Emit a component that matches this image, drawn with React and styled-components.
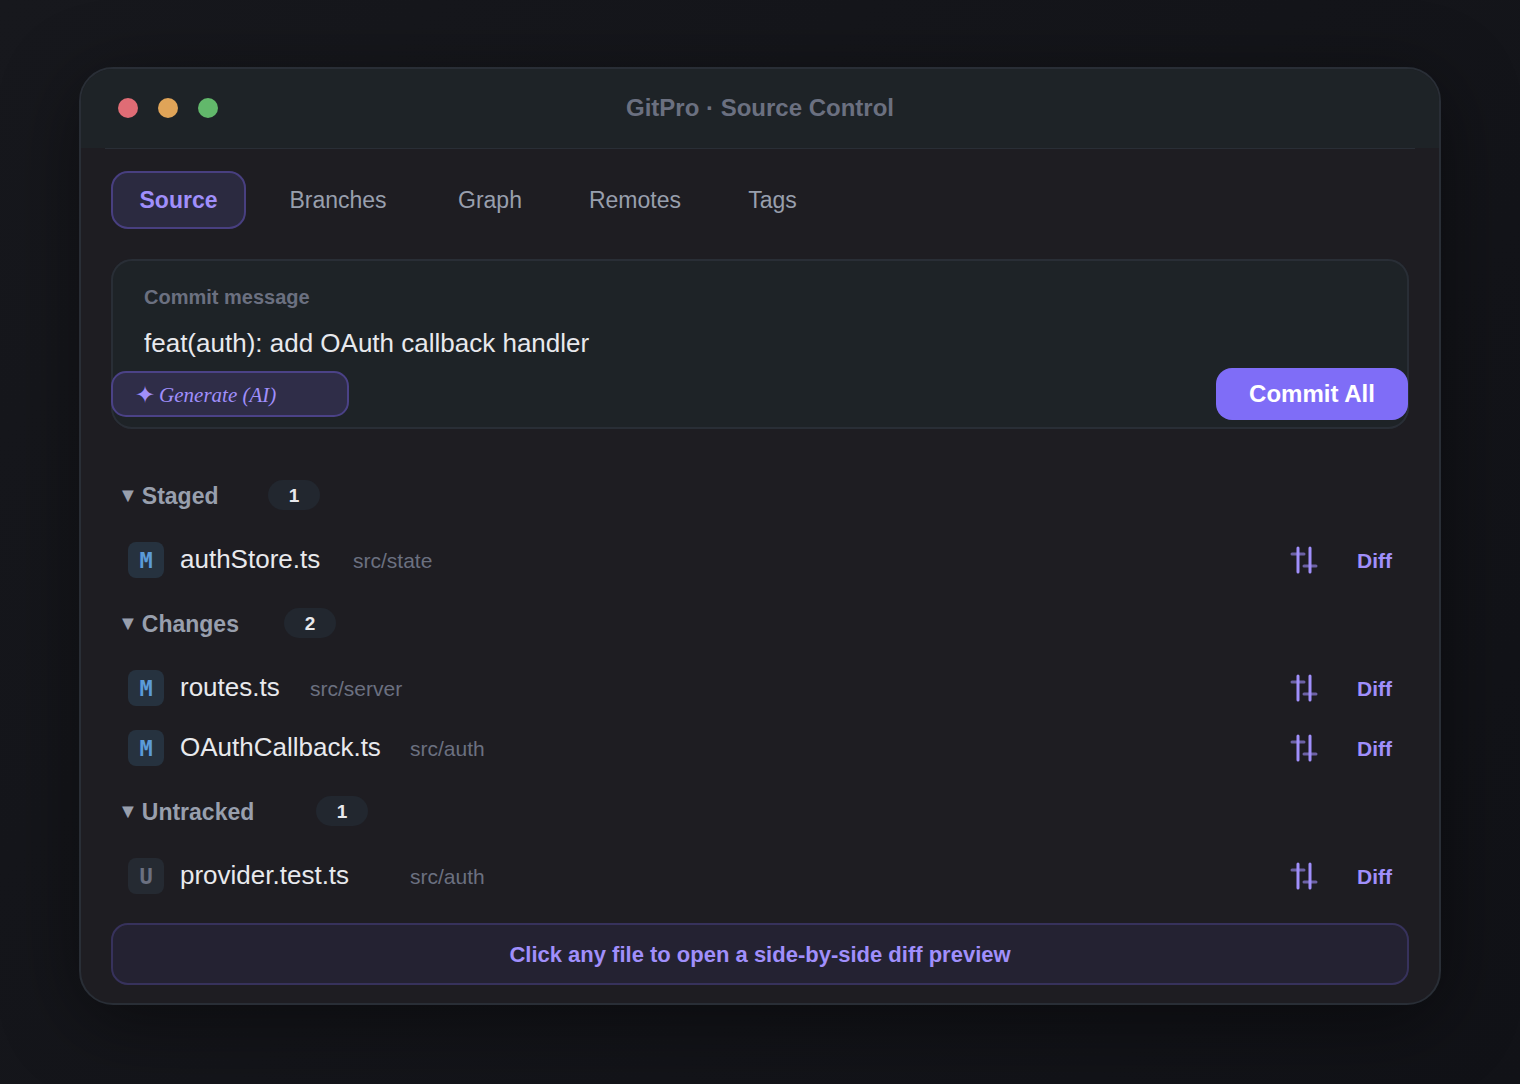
// src/App.jsx
import React, { useState } from "react";
import styled, { createGlobalStyle } from "styled-components";

// -------- Data --------

const tabs = [
  { name: "Source", width: 135 },
  { name: "Branches", width: 152 },
  { name: "Graph", width: 120 },
  { name: "Remotes", width: 138 },
  { name: "Tags", width: 105 },
];

const sections = [
  {
    title: "Staged",
    width: 150,
    files: [{ status: "M", name: "authStore.ts", path: "src/state", width: 173 }],
  },
  {
    title: "Changes",
    width: 166,
    files: [
      { status: "M", name: "routes.ts", path: "src/server", width: 130 },
      { status: "M", name: "OAuthCallback.ts", path: "src/auth", width: 230 },
    ],
  },
  {
    title: "Untracked",
    width: 198,
    files: [{ status: "U", name: "provider.test.ts", path: "src/auth", width: 230 }],
  },
];

// -------- Styled Components --------

const GlobalStyle = createGlobalStyle`
  * {
    box-sizing: border-box;
  }

  body {
    margin: 0;
    background: #121317;
    font-family: "Liberation Sans", Arial, sans-serif;
  }

  button,
  input {
    margin: 0;
    padding: 0;
    border: none;
    background: none;
    font-family: inherit;
  }

  button {
    cursor: pointer;
  }
`;

const Page = styled.div`
  min-height: 100vh;
  padding: 67px 79px 79px;
  background: linear-gradient(135deg, #17181d 0%, #111217 100%);
`;

const Window = styled.main`
  border: 2px solid #292e36;
  border-radius: 34px;
  background: #1e1d22;
  box-shadow: 0 16px 80px rgba(0, 0, 0, 0.45);
`;

const TitleBar = styled.header`
  display: grid;
  grid-template-columns: 1fr auto 1fr;
  align-items: center;
  height: 79px;
  padding: 0 37px 2px;
  border-radius: 32px 32px 0 0;
  background: #1e2327;
`;

const Lights = styled.div`
  display: flex;
  gap: 20px;
`;

const Light = styled.span`
  width: 20px;
  height: 20px;
  border-radius: 50%;
  background: ${({ $color }) => $color};
`;

const Title = styled.h1`
  margin: 0;
  color: #6b7080;
  font-size: 24px;
  line-height: 28px;
`;

const Divider = styled.hr`
  height: 1px;
  margin: 0 24px;
  border: none;
  background: #292e36;
`;

const Content = styled.div`
  padding: 22px 30px 18px;
`;

const TabList = styled.nav`
  display: flex;
  gap: 16px;
`;

const Tab = styled.button`
  width: ${({ $width }) => $width}px;
  height: 58px;
  border: 2px solid ${({ $active }) => ($active ? "#483f80" : "transparent")};
  border-radius: 17px;
  background: ${({ $active }) => ($active ? "#2b2a40" : "transparent")};
  color: ${({ $active }) => ($active ? "#a08ffb" : "#989fad")};
  font-size: 23px;
  font-weight: ${({ $active }) => ($active ? 700 : 400)};
`;

const CommitBox = styled.form`
  display: flex;
  flex-direction: column;
  margin-top: 30px;
  padding: 26px 0 9px;
  border-radius: 21px;
  background: #1e2327;
  box-shadow: inset 0 0 0 2px #292e36;
`;

const CommitLabel = styled.label`
  padding: 0 33px;
  color: #6b7080;
  font-size: 20px;
  font-weight: 700;
  line-height: 24px;
`;

const CommitInput = styled.input`
  height: 34px;
  margin: 17px 33px 8px;
  outline: none;
  color: #e8e9ed;
  font-size: 26px;
`;

const CommitActions = styled.div`
  display: flex;
  align-items: center;
  justify-content: space-between;
  padding-right: 1px;
`;

const GenerateButton = styled.button`
  display: flex;
  align-items: center;
  gap: 4px;
  width: 238px;
  height: 46px;
  padding: 2px 0 0 22px;
  border: 2px solid #4b4287;
  border-radius: 15px;
  background: #2f2d48;
  color: #a08ffb;
  font-family: "Liberation Serif", "Times New Roman", serif;
  font-size: 21px;
  font-style: italic;
`;

const Sparkle = styled.span`
  font-family: "DejaVu Sans", sans-serif;
  font-size: 24px;
  font-style: normal;
  line-height: 24px;
`;

const CommitButton = styled.button`
  width: 192px;
  height: 52px;
  border-radius: 16px;
  background: #7f6df7;
  color: #ffffff;
  font-size: 24px;
  font-weight: 700;
`;

const Sections = styled.div`
  margin-top: 33px;
`;

const SectionHeader = styled.div`
  display: flex;
  align-items: center;
  height: 68px;
  padding: 0 7px 2px;
`;

const SectionTitle = styled.h2`
  width: ${({ $width }) => $width}px;
  margin: 0;
`;

const SectionToggle = styled.button`
  display: flex;
  align-items: center;
  gap: 4px;
  padding-top: 2px;
  color: #989fad;
  font-size: 23px;
  font-weight: 700;
`;

const Caret = styled.span`
  padding-bottom: 2px;
  font-size: 20px;
  line-height: 22px;
`;

const Count = styled.span`
  width: 52px;
  padding-top: 2px;
  border-radius: 15px;
  background: #22272f;
  color: #e8e9ed;
  font-size: 19px;
  font-weight: 700;
  line-height: 28px;
  text-align: center;
`;

const FileList = styled.ul`
  margin: 0;
  padding: 0;
  list-style: none;
`;

const FileRow = styled.li`
  display: flex;
  align-items: center;
  gap: 16px;
  height: 60px;
  padding: 0 17px;
`;

const Status = styled.span`
  width: 36px;
  padding-top: 2px;
  border-radius: 8px;
  background: ${({ $modified }) => ($modified ? "#26323f" : "#252a32")};
  color: ${({ $modified }) => ($modified ? "#5b9bd8" : "#6b7080")};
  font-family: "DejaVu Sans Mono", monospace;
  font-size: 22px;
  font-weight: 700;
  line-height: 34px;
  text-align: center;
`;

const FileInfo = styled.div`
  display: flex;
  flex: 1;
  align-items: baseline;
  padding-bottom: 2px;
`;

const FileName = styled.span`
  width: ${({ $width }) => $width}px;
  color: #e8e9ed;
  font-size: 26px;
`;

const FilePath = styled.span`
  color: #6b7080;
  font-size: 21px;
`;

const DiffButton = styled.button`
  display: flex;
  align-items: center;
  gap: 39px;
  color: #a08ffb;
  font-size: 21px;
  font-weight: 700;
`;

const DiffLabel = styled.span`
  padding-top: 2px;
`;

const Hint = styled.p`
  margin: 17px 0 0;
  padding-top: 2px;
  border: 2px solid #37325c;
  border-radius: 17px;
  background: #242232;
  color: #a08ffb;
  font-size: 22px;
  font-weight: 700;
  line-height: 56px;
  text-align: center;
`;

// -------- Components --------

function DiffIcon() {
  return (
    <svg width="28" height="28" viewBox="0 0 28 28" stroke="#a08ffb" strokeWidth="3" strokeLinecap="round" aria-hidden="true">
      <path d="M2 8H14M14 20H26" opacity="0.6" />
      <path d="M8 2V26M20 2V26" />
    </svg>
  );
}

function FileItem({ file }) {
  return (
    <FileRow>
      <Status $modified={file.status === "M"}>{file.status}</Status>
      <FileInfo>
        <FileName $width={file.width}>{file.name}</FileName>
        <FilePath>{file.path}</FilePath>
      </FileInfo>
      <DiffButton type="button">
        <DiffIcon />
        <DiffLabel>Diff</DiffLabel>
      </DiffButton>
    </FileRow>
  );
}

export default function App() {
  const [activeTab, setActiveTab] = useState("Source");
  const [message, setMessage] = useState("feat(auth): add OAuth callback handler");

  return (
    <Page>
      <GlobalStyle />
      <Window>
        <TitleBar>
          <Lights>
            <Light $color="#e06c75" />
            <Light $color="#e0a458" />
            <Light $color="#62b86b" />
          </Lights>
          <Title>GitPro · Source Control</Title>
        </TitleBar>
        <Divider />

        <Content>
          <TabList>
            {tabs.map((tab) => (
              <Tab
                key={tab.name}
                type="button"
                $width={tab.width}
                $active={tab.name === activeTab}
                onClick={() => setActiveTab(tab.name)}
              >
                {tab.name}
              </Tab>
            ))}
          </TabList>

          <CommitBox onSubmit={(e) => e.preventDefault()}>
            <CommitLabel htmlFor="commit-message">Commit message</CommitLabel>
            <CommitInput
              id="commit-message"
              type="text"
              value={message}
              onChange={(e) => setMessage(e.target.value)}
            />
            <CommitActions>
              <GenerateButton type="button">
                <Sparkle>✦</Sparkle>
                Generate (AI)
              </GenerateButton>
              <CommitButton type="submit">Commit All</CommitButton>
            </CommitActions>
          </CommitBox>

          <Sections>
            {sections.map((section) => (
              <section key={section.title}>
                <SectionHeader>
                  <SectionTitle $width={section.width}>
                    <SectionToggle type="button">
                      <Caret>▼</Caret>
                      {section.title}
                    </SectionToggle>
                  </SectionTitle>
                  <Count>{section.files.length}</Count>
                </SectionHeader>
                <FileList>
                  {section.files.map((file) => (
                    <FileItem key={file.name} file={file} />
                  ))}
                </FileList>
              </section>
            ))}
          </Sections>

          <Hint>Click any file to open a side-by-side diff preview</Hint>
        </Content>
      </Window>
    </Page>
  );
}
